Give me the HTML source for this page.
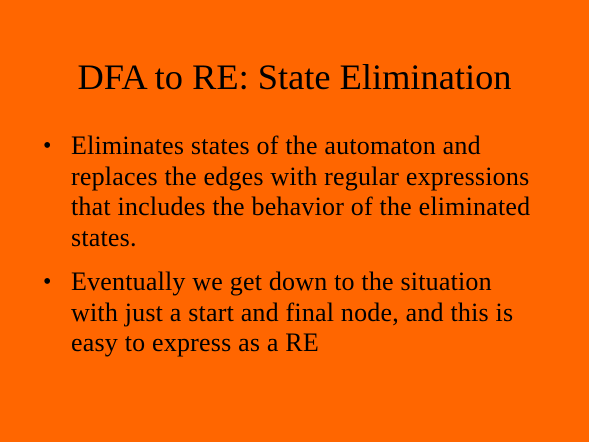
<!DOCTYPE html>
<html><head><style>
html,body{margin:0;padding:0}
body{width:589px;height:442px;background:#FF6600;font-family:"Liberation Serif",serif;color:#000;position:relative;overflow:hidden}
h1{position:absolute;left:0;width:589px;top:55px;margin:0;text-align:center;font-weight:normal;font-size:36.4px;line-height:44px}
.b{position:absolute;left:71px;width:520px;font-size:26px;letter-spacing:0.2px;line-height:30.5px;white-space:nowrap}
.b:before{content:"•";position:absolute;left:-28px;font-size:24px}
</style></head><body>
<h1>DFA to RE: State Elimination</h1>
<div class="b" style="top:131px">Eliminates states of the automaton and<br>replaces the edges with regular expressions<br>that includes the behavior of the eliminated<br>states.</div>
<div class="b" style="top:267px">Eventually we get down to the situation<br>with just a start and final node, and this is<br>easy to express as a RE</div>
</body></html>
